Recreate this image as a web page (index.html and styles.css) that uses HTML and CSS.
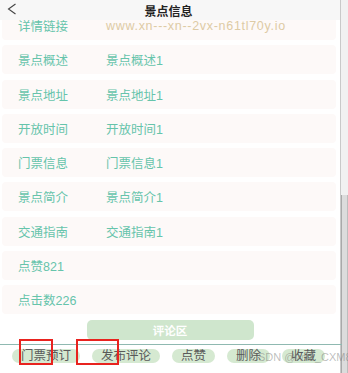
FILE: index.html
```html
<!DOCTYPE html>
<html lang="zh">
<head>
    <meta charset="UTF-8">
    <meta name="viewport" content="width=device-width, initial-scale=1.0">
    <title>景点信息</title>
    <link rel="stylesheet" href="styles.css">
</head>
<body>
    <div class="screen">
        <div class="page">
            <div class="header">
                <svg class="back" width="10" height="12" viewBox="0 0 10 12">
                    <polyline points="8.5,1 1.5,6 8.5,11" fill="none" stroke="#444" stroke-width="1.1"/>
                </svg>
                <span class="title">景点信息</span>
            </div>

            <div class="scroll">
                <div class="list">
                    <div class="card"><span class="label">详情链接</span><span class="link">www.xn---xn--2vx-n61tl70y.io</span></div>
                    <div class="card"><span class="label">景点概述</span><span>景点概述1</span></div>
                    <div class="card"><span class="label">景点地址</span><span>景点地址1</span></div>
                    <div class="card"><span class="label">开放时间</span><span>开放时间1</span></div>
                    <div class="card"><span class="label">门票信息</span><span>门票信息1</span></div>
                    <div class="card"><span class="label">景点简介</span><span>景点简介1</span></div>
                    <div class="card"><span class="label">交通指南</span><span>交通指南1</span></div>
                    <div class="card"><span>点赞821</span></div>
                    <div class="card"><span>点击数226</span></div>
                </div>
                <div class="comments">评论区</div>
            </div>

            <div class="footer">
                <span class="pill">门票预订</span>
                <span class="pill">发布评论</span>
                <span class="pill">点赞</span>
                <span class="pill">删除</span>
                <span class="pill">收藏</span>
                <span class="watermark">CSDN @wx2_CXM88</span>
                <span class="mark mark-one"></span>
                <span class="mark mark-two"></span>
            </div>
        </div>
        <div class="scrollbar"><div class="thumb"></div></div>
    </div>
</body>
</html>
```

FILE: styles.css
```css
body {
    margin: 0;
    background: #fff;
    font-family: "Liberation Sans", "Noto Sans CJK SC", sans-serif;
}
.screen {
    display: flex;
    width: 348px;
    height: 373px;
    overflow: hidden;
}
.page {
    flex: 1;
    display: flex;
    flex-direction: column;
    min-width: 0;
}
.header {
    position: relative;
    height: 20px;
    background: #f7f7f7;
    display: flex;
    align-items: center;
    justify-content: center;
    flex-shrink: 0;
}
.back {
    position: absolute;
    left: 7px;
    top: 3px;
}
.title {
    font-size: 12px;
    font-weight: bold;
    color: #222;
    margin-right: 3px;
}
.scroll {
    flex: 1;
    overflow: hidden;
}
.list {
    margin-top: -9px;
    display: flex;
    flex-direction: column;
    gap: 5.3px;
}
.card {
    height: 29px;
    margin: 0 4px 0 2px;
    padding-left: 16px;
    background: #fdf9f8;
    border-radius: 4px;
    display: flex;
    align-items: center;
    font-size: 12.5px;
    color: #66c4ab;
    white-space: nowrap;
}
.label {
    width: 88px;
    flex-shrink: 0;
}
.link {
    color: #ddcba5;
    letter-spacing: 0.7px;
}
.comments {
    width: 167px;
    height: 20px;
    margin: 6px auto 0;
    background: #cfe6cd;
    border-radius: 5px;
    color: #fff;
    font-size: 11.5px;
    font-weight: bold;
    display: flex;
    align-items: center;
    justify-content: center;
}
.footer {
    position: relative;
    height: 24px;
    border-top: 1px solid #8fb9b1;
    margin-right: -2px;
    padding: 4px 0 0 12px;
    display: flex;
    gap: 12px;
    flex-shrink: 0;
    white-space: nowrap;
}
.pill {
    height: 14px;
    line-height: 14px;
    padding: 0 9px;
    background: #d5e9d1;
    border-radius: 7px;
    font-size: 12.5px;
    color: #5a5a5a;
    flex-shrink: 0;
}
.watermark {
    position: absolute;
    left: 250px;
    top: 5px;
    font-size: 11px;
    line-height: 14px;
    color: rgba(110, 110, 110, 0.45);
}
.mark {
    position: absolute;
    top: -6px;
    height: 22px;
    border: 2px solid #e8231f;
}
.mark-one {
    left: 19px;
    width: 30px;
}
.mark-two {
    left: 76px;
    width: 39px;
}
.scrollbar {
    width: 7px;
    flex-shrink: 0;
    background: #f1f1f1;
    border-left: 1px solid #c9c9c9;
    display: flex;
    flex-direction: column;
    justify-content: flex-end;
}
.thumb {
    height: 178px;
    background: #dcdcdc;
    border-left: 1px solid #a9a9a9;
    border-right: 1px solid #bdbdbd;
}
```
